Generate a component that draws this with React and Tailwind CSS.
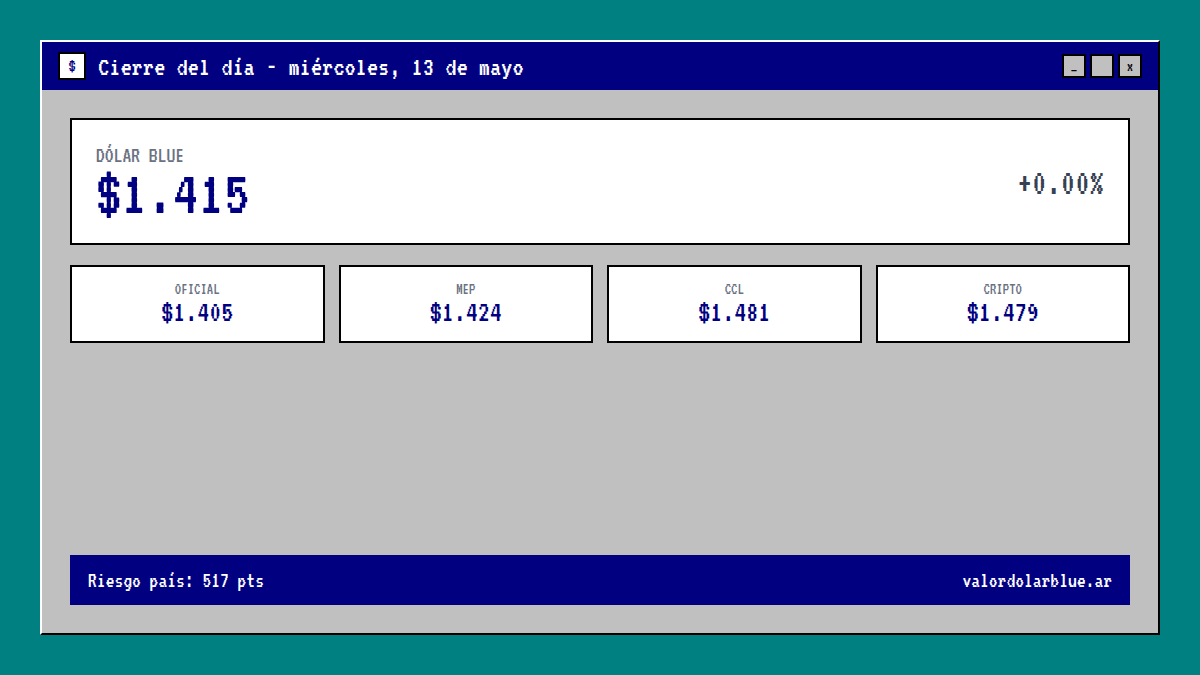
const RATES = [
  { label: "OFICIAL", value: "$1.405" },
  { label: "MEP", value: "$1.424" },
  { label: "CCL", value: "$1.481" },
  { label: "CRIPTO", value: "$1.479" },
];

function WinButton({ children }) {
  return (
    <div className="w-6 h-6 flex items-center justify-center border-2 border-black bg-[#c0c0c0] text-base leading-none text-black">
      {children}
    </div>
  );
}

export default function App() {
  return (
    <div className="w-[1200px] h-[675px] bg-[#008080] p-10 overflow-hidden font-['VT323','Liberation_Mono',monospace]">
      <div className="h-full flex flex-col bg-[#c0c0c0] border-2 border-t-white border-l-white border-r-black border-b-black">
        {/* Title bar */}
        <div className="h-12 shrink-0 bg-[#000080] flex items-center justify-between px-4">
          <div className="flex items-center gap-3">
            <div className="w-7 h-7 flex items-center justify-center bg-white border-2 border-black text-[#000080] text-lg leading-none">
              $
            </div>
            <span className="text-white text-[28px] leading-[30px] mt-0.5">
              Cierre del día - miércoles, 13 de mayo
            </span>
          </div>
          <div className="flex gap-1">
            <WinButton>_</WinButton>
            <WinButton></WinButton>
            <WinButton>x</WinButton>
          </div>
        </div>

        {/* Body */}
        <div className="flex-1 flex flex-col p-7">
          <div className="h-[127px] flex items-center justify-between bg-white border-2 border-black px-6">
            <div className="flex flex-col">
              <span className="text-gray-500 text-[22px] leading-6">DÓLAR BLUE</span>
              <span className="text-[#000080] text-[64px] leading-[54px]">$1.415</span>
            </div>
            <span className="text-gray-700 text-4xl leading-[38px] mt-0.5">+0.00%</span>
          </div>

          <div className="grid grid-cols-4 gap-3.5 mt-5">
            {RATES.map((r) => (
              <div key={r.label} className="h-[78px] flex flex-col items-center justify-center bg-white border-2 border-black">
                <span className="text-gray-500 text-base leading-none">{r.label}</span>
                <span className="text-[#000080] text-[30px] leading-none">{r.value}</span>
              </div>
            ))}
          </div>

          <div className="mt-auto h-[50px] flex items-center justify-between bg-[#000080] px-[18px] text-white text-[22px] leading-none">
            <span>Riesgo país: 517 pts</span>
            <span>valordolarblue.ar</span>
          </div>
        </div>
      </div>
    </div>
  );
}
